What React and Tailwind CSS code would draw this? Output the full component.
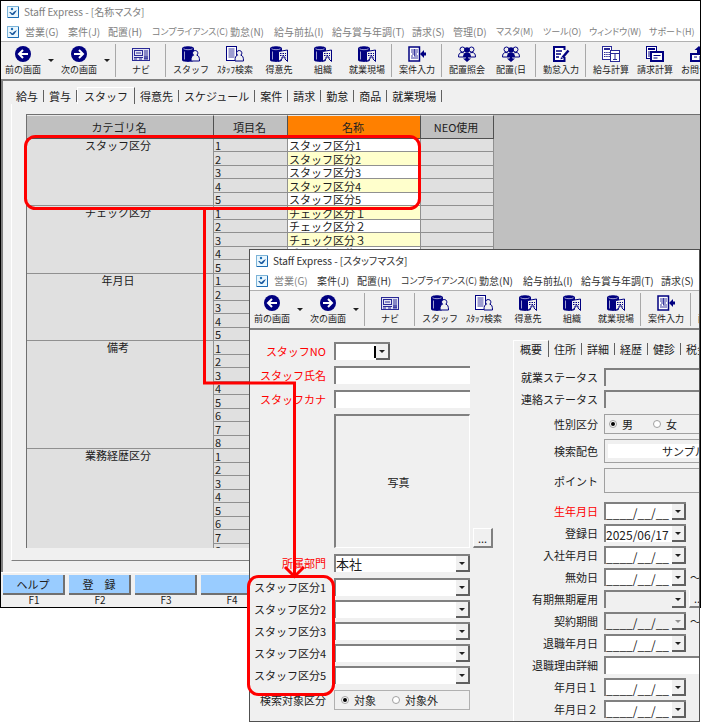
import React from "react";
import clsx from "clsx";

// region Data

const menus = [
	{ label: "営業(G)", width: "w-[43px]" },
	{ label: "案件(J)", width: "w-10" },
	{ label: "配置(H)", width: "w-11" },
	{ label: "コンプライアンス(C)", width: "w-[78px]", kana: true },
	{ label: "勤怠(N)", width: "w-11" },
	{ label: "給与前払(I)", width: "w-[58px]" },
	{ label: "給与賞与年調(T)", width: "w-20" },
	{ label: "請求(S)", width: "w-[41px]" },
	{ label: "管理(D)", width: "w-[43px]" },
	{ label: "マスタ(M)", width: "w-[47px]", kana: true },
	{ label: "ツール(O)", width: "w-[46px]", kana: true },
	{ label: "ウィンドウ(W)", width: "w-[60px]", kana: true },
	{ label: "サポート(H)", width: "w-[47px]", kana: true },
];

const tools = [
	[
		{ label: "前の画面", icon: "back", arrow: true },
		{ label: "次の画面", icon: "next", arrow: true },
	],
	[{ label: "ナビ", icon: "navi" }],
	[
		{ label: "スタッフ", icon: "staff" },
		{ label: "ｽﾀｯﾌ検索", icon: "search" },
		{ label: "得意先", icon: "client" },
		{ label: "組織", icon: "client" },
		{ label: "就業現場", icon: "client" },
	],
	[{ label: "案件入力", icon: "project" }],
	[
		{ label: "配置照会", icon: "people" },
		{ label: "配置(日", icon: "people" },
	],
	[{ label: "勤怠入力", icon: "edit" }],
	[
		{ label: "給与計算", icon: "payroll" },
		{ label: "請求計算", icon: "billing" },
		{ label: "お問合せ", icon: "inquiry" },
	],
];

const masterTabs = [
	"給与",
	"賞与",
	"スタッフ",
	"得意先",
	"スケジュール",
	"案件",
	"請求",
	"勤怠",
	"商品",
	"就業現場",
];

const staffTabs = ["概要", "住所", "詳細", "経歴", "健診", "税金"];

const categories = [
	{
		name: "スタッフ区分",
		items: [
			"スタッフ区分1",
			"スタッフ区分2",
			"スタッフ区分3",
			"スタッフ区分4",
			"スタッフ区分5",
		],
	},
	{
		name: "チェック区分",
		items: [
			"チェック区分１",
			"チェック区分２",
			"チェック区分３",
			"チェック区分４",
			"",
		],
	},
	{ name: "年月日", items: ["", "", "", "", ""] },
	{ name: "備考", items: ["", "", "", "", "", "", "", ""] },
	{ name: "業務経歴区分", items: ["", "", "", "", "", "", "", ""] },
];

const functionKeys = [
	{ key: "F1", label: "ヘルプ" },
	{ key: "F2", label: "登　録" },
	{ key: "F3", label: "" },
	{ key: "F4", label: "" },
];

const emptyDate = "____/__/__";

// region Icons

const Cylinder = () => (
	<>
		<path d="M0 2.500C0-.5 12-.5 12 2.500V14c0 2.500-12 2.500-12 0z" fill="#000080" />
		<path
			d="M1.500 2.800c1.500 1.200 7.500 1.200 9 0M2.500 5.500v8"
			stroke="#c8c8e8"
			strokeWidth="0.8"
			fill="none"
		/>
	</>
);

const Person = () => (
	<path
		d="M13.200 4.500a2.600 2.600 0 0 1 1.600 4.700c2 .5 2.700 2 2.700 5.800H9c0-3.800.7-5.300 2.600-5.800a2.600 2.600 0 0 1 1.600-4.700z"
		fill="#f0f0f0"
		stroke="#000080"
	/>
);

const icons = {
	back: (
		<>
			<circle cx="9" cy="8" r="8" fill="#000080" />
			<path d="M14 8H5m4-4L5 8l4 4" stroke="#fff" strokeWidth="2" fill="none" />
		</>
	),
	next: (
		<>
			<circle cx="9" cy="8" r="8" fill="#000080" />
			<path d="M4 8h9M9 4l4 4-4 4" stroke="#fff" strokeWidth="2" fill="none" />
		</>
	),
	navi: (
		<g fill="none" stroke="#2a2a96">
			<rect x=".5" y="2.500" width="17" height="12" fill="#e4e4f4" />
			<rect x="2.500" y="4.500" width="8" height="5" />
			<path d="M4 7h5M12 5h4M12 7h4M12 9h4M2 11.500h9M2 13h3m2 0h3m2 0h4" />
			<path d="M13 10v3M15 10v3" strokeWidth="1.500" />
		</g>
	),
	staff: (
		<>
			<Cylinder />
			<Person />
		</>
	),
	search: (
		<>
			<rect x=".5" y=".5" width="10" height="14" fill="#fff" stroke="#000080" />
			<path d="M2.500 3h6M2.500 5h6M2.500 7h6M2.500 9h6M2.500 11h6" stroke="#3a3aa0" />
			<Person />
		</>
	),
	client: (
		<>
			<Cylinder />
			<path d="M8.500 15.500V5.500l9-1.500v11.500l-2.500-2.500v-2h-3v2z" fill="#f0f0f0" stroke="#000080" />
			<path d="M10 7.500h6M10 9.500h6" stroke="#000080" strokeDasharray="1.500 1" />
		</>
	),
	project: (
		<>
			<rect x="1" y="1" width="10.500" height="14" fill="#fff" stroke="#000080" strokeWidth="1.500" />
			<path d="M3 4h7M3 6h7M4 8h5M3 10h2m1 0h4M3 12h7M6.500 3v7" stroke="#3a3aa0" />
			<path d="M12 8l4-4v2.500h2v3h-2V12z" fill="#000080" />
		</>
	),
	people: (
		<>
			<g fill="#f0f0f0" stroke="#000080">
				<circle cx="4.500" cy="3.500" r="2.500" />
				<circle cx="13.500" cy="3.500" r="2.500" />
				<path d="M.5 11c0-3 1-4.500 3.500-4.500S7 8 7 11zM17.500 11c0-3-1-4.500-3.500-4.500S11 8 11 11z" />
			</g>
			<g fill="#000080">
				<circle cx="9" cy="4" r="2.800" />
				<path d="M5 11c0-3 1.500-4.500 4-4.500s4 1.500 4 4.500z" />
				<path d="M7.500 11h3v1.500H13L9 16l-4-3.500h2.500z" />
			</g>
		</>
	),
	edit: (
		<>
			<path d="M12.500 4V1H2v14h10.500v-4" fill="#fff" stroke="#000080" strokeWidth="2" />
			<path d="M4 5h6M4 8h5M4 11h3" stroke="#000080" strokeWidth="1.500" />
			<path d="M16.500 4.500l-6 7" stroke="#000080" strokeWidth="2.500" />
			<path d="M8.500 13.500l.5-2.500 2 1.500z" fill="#000080" />
		</>
	),
	payroll: (
		<g stroke="#2a2a96">
			<rect x=".5" y=".5" width="9" height="13" fill="#fff" />
			<path d="M2 3h6" strokeWidth="2" />
			<path d="M2 6.500h6M2 8.500h6M2 10.500h6" strokeDasharray="1.500 .7" />
			<rect x="8.500" y="4.500" width="9" height="11" fill="#fff" />
			<path d="M9 7.500h8M13 8v6M11 13.500h4" />
		</g>
	),
	billing: (
		<g stroke="#000080">
			<rect x=".5" y=".5" width="10" height="12" fill="#fff" />
			<path d="M2 3h7" strokeWidth="2" />
			<path d="M2 6h2M2 8h2M2 10h2" />
			<rect x="5" y="6" width="12" height="9" fill="#fff" strokeWidth="2" />
			<path d="M7.500 9.500h7M7.500 12h4" />
		</g>
	),
	inquiry: (
		<>
			<path d="M9 0l4.500 4H11v3H7V4H4.500z" fill="#000080" />
			<rect x="1" y="8" width="16" height="7" fill="#fff" stroke="#000080" strokeWidth="2" />
			<path d="M4 11h3m2 0h5M9 13h5" stroke="#000080" />
		</>
	),
};

const AppIcon = () => (
	<svg className="size-3 shrink-0" viewBox="0 0 12 12">
		<rect x=".5" y=".5" width="11" height="11" fill="#e8f6fd" stroke="#7db4d8" />
		<path d="M11.500 1v10.500H1" stroke="#1c6cb4" fill="none" />
		<circle cx="5" cy="3" r="1.200" fill="#1c6cb4" />
		<path d="M2 6c1.500-.3 2.500.5 3.300 1.500C6.500 6 8 4.700 10 4.200 8.500 6 7.500 9 5.500 9 3.700 9 4 7 2 6z" fill="#14549c" />
	</svg>
);

const Triangle = () => (
	<span className="block border-x-[3px] border-t-[3px] border-x-transparent border-t-current" />
);

// region Window Frame

const TitleBar = ({ title, active }) => (
	<div
		className={clsx(
			"flex h-[21px] items-center gap-[5px] bg-white pl-1.5 text-[10px] [font-feature-settings:'palt']",
			active ? "text-[#303030]" : "text-[#808080]"
		)}
	>
		<AppIcon />
		<h2 className="whitespace-nowrap">Staff Express - [{title}]</h2>
	</div>
);

const MenuBar = ({ items, active }) => (
	<nav className="flex h-[19px] items-center overflow-hidden bg-white pl-1.5">
		<AppIcon />
		<div className="flex pl-1.5">
			{items.map((item, i) => (
				<button
					key={item.label}
					className={clsx(
						"shrink-0 whitespace-nowrap text-left leading-4",
						item.width,
						item.kana
							? "text-[9px] [font-feature-settings:'palt']"
							: "text-[10px]",
						active && i > 0 ? "text-[#303030]" : "text-[#808080]"
					)}
				>
					{item.label}
				</button>
			))}
		</div>
	</nav>
);

const Toolbar = ({ groups }) => (
	<div className="flex h-[38px] overflow-hidden border-t border-[#b0b0b0] bg-[#f0f0f0] py-0.5">
		{groups.map((group, i) => (
			<div key={i} className="flex shrink-0">
				{i > 0 && (
					<span className="mr-[3px] ml-0.5 w-px bg-[#a8a8a8]" />
				)}
				{group.map((tool) => (
					<React.Fragment key={tool.label}>
						<button className="flex w-11 shrink-0 flex-col items-center pt-0.5">
							<svg className="h-4 w-[18px]" viewBox="0 0 18 16">
								{icons[tool.icon]}
							</svg>
							<span className="pt-0.5 text-[9px] leading-3 whitespace-nowrap">
								{tool.label}
							</span>
						</button>
						{tool.arrow && (
							<button
								className="flex w-3 items-center justify-center"
								aria-label={`${tool.label} 一覧`}
							>
								<Triangle />
							</button>
						)}
					</React.Fragment>
				))}
			</div>
		))}
	</div>
);

const TabStrip = ({ tabs, selected }) => (
	<div role="tablist" className="flex h-[17px] overflow-hidden">
		{tabs.map((tab) => (
			<button
				key={tab}
				role="tab"
				aria-selected={tab === selected}
				className={clsx(
					"flex shrink-0 items-center",
					tab === selected
						? "border-t border-r border-l border-t-white border-r-[#606060] border-l-white px-1.5"
						: "px-[5px]"
				)}
			>
				<span>{tab}</span>
				{tab !== selected && (
					<span className="-mr-[5px] ml-[5px] h-3 w-px bg-[#606060]" />
				)}
			</button>
		))}
	</div>
);

// region Master Window

const MasterTable = () => {
	let head =
		"border-r border-b border-[#505050] border-t border-t-[#e8e8e8] pr-0.5 font-normal";
	let cell = "border-r border-b border-[#909090]";

	return (
		<table className="w-[467px] table-fixed border-separate border-spacing-0 border-l border-[#707070]">
			<colgroup>
				<col className="w-[187px]" />
				<col className="w-[74px]" />
				<col className="w-[133px]" />
				<col className="w-[73px]" />
			</colgroup>
			<thead>
				<tr className="h-6 bg-[#c0c0c0]">
					<th className={head}>カテゴリ名</th>
					<th className={head}>項目名</th>
					<th className={clsx(head, "bg-[#ff8000]")}>名称</th>
					<th className={head}>NEO使用</th>
				</tr>
			</thead>
			<tbody className="bg-[#e0e0e0] leading-3">
				{categories.map((category) =>
					category.items.map((item, i) => (
						<tr
							key={`${category.name}-${i}`}
							className="group h-[13px] even:h-[14px]"
						>
							{i === 0 && (
								<td
									rowSpan={category.items.length}
									className={clsx(
										cell,
										"pr-1 text-center align-top"
									)}
								>
									{category.name}
								</td>
							)}
							<td className={clsx(cell, "pl-px")}>{i + 1}</td>
							<td
								className={clsx(
									cell,
									"bg-white pl-px group-even:bg-[#ffffcc]"
								)}
							>
								{item}
							</td>
							<td className={cell} />
						</tr>
					))
				)}
			</tbody>
		</table>
	);
};

const MasterWindow = () => (
	<section className="border border-black bg-[#f0f0f0]">
		<TitleBar title="名称マスタ" />
		<MenuBar items={menus} />
		<Toolbar groups={tools} />
		<div className="border-t-2 border-l-2 border-[#808080] pt-1.5 pb-[11px] pl-2">
			<TabStrip tabs={masterTabs} selected="スタッフ" />
			<div className="border-b border-l border-b-[#808080] border-l-white pt-2.5 pb-3 pl-3.5">
				<div className="h-[434px] overflow-hidden border-t border-[#707070] bg-[#c0c0c0]">
					<MasterTable />
				</div>
			</div>
		</div>
		<div className="flex gap-1 border-t border-white pt-0.5 pb-0.5 pl-0.5">
			{functionKeys.map((item) => (
				<label key={item.key} className="flex w-[62px] flex-col text-center">
					<button className="h-5 border-r-2 border-b-2 border-[#707070] bg-[#99ccff] leading-4">
						{item.label}
					</button>
					<span className="text-[10px] leading-[10px]">{item.key}</span>
				</label>
			))}
		</div>
	</section>
);

// region Form Controls

const sunken = "border-t-2 border-l-2 border-t-[#808080] border-l-[#808080]";

const ArrowBox = ({ disabled }) => (
	<span
		className={clsx(
			"pointer-events-none absolute top-0.5 right-0 bottom-0 flex w-3.5 items-center justify-center border-r-2 border-b-2 border-[#606060] bg-[#f0f0f0]",
			disabled && "text-[#909090]"
		)}
	>
		<Triangle />
	</span>
);

const Row = ({ id, label, red, wide, children }) => (
	<div className="flex items-center">
		<label
			htmlFor={id}
			className={clsx(
				"shrink-0 text-right whitespace-nowrap",
				wide ? "mr-1.5 w-[84px]" : "mr-2 w-[76px]",
				red && "text-[#ff0000]"
			)}
		>
			{label}
		</label>
		{children}
	</div>
);

const SelectField = ({ id, value }) => (
	<div className="relative w-[136px]">
		<select
			id={id}
			className={clsx(
				"block h-[18px] w-full appearance-none bg-white text-[13px] leading-4",
				sunken
			)}
		>
			<option>{value}</option>
		</select>
		<ArrowBox />
	</div>
);

const DateField = ({ id, value, disabled }) => (
	<div className="relative w-[82px] shrink-0">
		<input
			id={id}
			defaultValue={value}
			disabled={disabled}
			className={clsx(
				"block h-[18px] w-full text-[12px] leading-4",
				disabled ? "bg-[#f0f0f0]" : "bg-white",
				sunken
			)}
		/>
		<ArrowBox disabled={disabled && value} />
	</div>
);

const Radio = ({ name, label, checked }) => (
	<label className="flex items-center gap-[5px]">
		<input
			type="radio"
			name={name}
			defaultChecked={checked}
			className="grid size-2 appearance-none place-items-center rounded-full border border-[#a0a0a0] bg-white before:size-1 before:rounded-full checked:before:bg-black"
		/>
		{label}
	</label>
);

// region Staff Window

const StaffBasics = () => (
	<div className="flex w-[263px] shrink-0 flex-col gap-1.5 pt-3">
		<Row id="staff-no" label="スタッフNO" red>
			<div className="relative w-14">
				<input
					id="staff-no"
					className={clsx("block h-[18px] w-full bg-white", sunken)}
				/>
				<span className="absolute top-1 right-3.5 h-3 w-0.5 bg-black" />
				<ArrowBox />
			</div>
		</Row>
		<Row id="staff-name" label="スタッフ氏名" red>
			<input
				id="staff-name"
				className={clsx("h-[18px] w-[136px] bg-white", sunken)}
			/>
		</Row>
		<Row id="staff-kana" label="スタッフカナ" red>
			<input
				id="staff-kana"
				className={clsx("h-[18px] w-[136px] bg-white", sunken)}
			/>
		</Row>
		<div className="flex items-end gap-[3px] pl-[84px]">
			<div
				className={clsx(
					"flex h-[134px] w-[136px] items-center justify-center border-r border-b border-r-white border-b-white pr-2",
					sunken
				)}
			>
				写真
			</div>
			<button className="h-5 w-5 border-t border-r-2 border-b-2 border-l border-t-white border-r-[#808080] border-b-[#808080] border-l-white leading-3">
				...
			</button>
		</div>
		<Row id="department" label="所属部門" red>
			<SelectField id="department" value="本社" />
		</Row>
		<div className="flex flex-col gap-1">
			{categories[0].items.map((item, i) => (
				<Row key={item} id={`kubun-${i}`} label={item}>
					<SelectField id={`kubun-${i}`} value="" />
				</Row>
			))}
		</div>
		<Row label="検索対象区分">
			<div className="flex h-5 w-[136px] items-center gap-4 border border-[#b0b0b0] pl-1.5">
				<Radio name="target" label="対象" checked />
				<Radio name="target" label="対象外" />
			</div>
		</Row>
	</div>
);

const StaffOverview = () => (
	<div className="min-w-0 flex-1 overflow-hidden pt-[10px]">
		<TabStrip tabs={staffTabs} selected="概要" />
		<div className="border-l border-white pt-[11px] pb-[3px]">
			<div className="flex flex-col gap-1">
				<Row id="work-status" label="就業ステータス" wide>
					<input
						id="work-status"
						readOnly
						className={clsx("h-[18px] min-w-0 flex-1", sunken)}
					/>
				</Row>
				<Row id="contact-status" label="連絡ステータス" wide>
					<input
						id="contact-status"
						readOnly
						className={clsx("h-[18px] min-w-0 flex-1", sunken)}
					/>
				</Row>
			</div>
			<div className="flex flex-col gap-[5px] pt-1.5">
				<Row label="性別区分" wide>
					<div className="flex h-5 flex-1 items-center gap-5 border border-r-0 border-[#a0a0a0] pl-1">
						<Radio name="sex" label="男" checked />
						<Radio name="sex" label="女" />
					</div>
				</Row>
				<Row label="検索配色" wide>
					<div className="flex h-6 min-w-0 flex-1 items-center overflow-hidden border border-r-0 border-[#a0a0a0] pl-[3px]">
						<span className="flex-1 bg-white pl-[54px] leading-[14px] whitespace-nowrap">
							サンプル
						</span>
					</div>
				</Row>
				<Row id="point" label="ポイント" wide>
					<input
						id="point"
						readOnly
						className="h-[25px] min-w-0 flex-1 border border-r-0 border-[#a0a0a0]"
					/>
				</Row>
			</div>
			<div className="flex flex-col gap-1 pt-[9px]">
				<Row id="birth" label="生年月日" red wide>
					<DateField id="birth" value={emptyDate} />
				</Row>
				<Row id="registered" label="登録日" wide>
					<DateField id="registered" value="2025/06/17" />
				</Row>
				<Row id="joined" label="入社年月日" wide>
					<DateField id="joined" value={emptyDate} />
				</Row>
				<Row id="invalid" label="無効日" wide>
					<DateField id="invalid" value={emptyDate} />
					<span className="pl-1 leading-4">～</span>
				</Row>
				<Row id="term" label="有期無期雇用" wide>
					<DateField id="term" value="" disabled />
					<button className="ml-[3px] h-[18px] w-5 shrink-0 border-b-2 border-l border-b-[#808080] border-l-white pl-1 text-left leading-3">
						...
					</button>
				</Row>
				<Row id="contract" label="契約期間" wide>
					<DateField id="contract" value={emptyDate} disabled />
					<span className="pl-1 leading-4">～</span>
				</Row>
				<Row id="retired" label="退職年月日" wide>
					<DateField id="retired" value={emptyDate} />
				</Row>
				<Row id="reason" label="退職理由詳細" wide>
					<input
						id="reason"
						className={clsx("h-[18px] min-w-0 flex-1 bg-white", sunken)}
					/>
				</Row>
				<Row id="date-1" label="年月日１" wide>
					<DateField id="date-1" value={emptyDate} />
				</Row>
				<Row id="date-2" label="年月日２" wide>
					<DateField id="date-2" value={emptyDate} />
				</Row>
			</div>
		</div>
	</div>
);

const StaffWindow = () => (
	<section className="absolute top-[249px] right-px left-[249px] border border-[#505050] bg-[#f0f0f0]">
		<TitleBar title="スタッフマスタ" active />
		<MenuBar items={menus.slice(0, 8)} active />
		<Toolbar groups={tools.slice(0, 5)} />
		<div className="flex border-t-2 border-[#808080]">
			<StaffBasics />
			<StaffOverview />
		</div>
	</section>
);

// region Callout

// red frames and the arrow that ties the master rows to the staff form
const Callout = () => (
	<svg
		className="pointer-events-none absolute top-0 left-0 h-[723px] w-[440px]"
		fill="none"
		stroke="#ff0000"
		strokeWidth="3"
	>
		<rect x="25.500" y="136.500" width="394" height="72" rx="10" />
		<rect x="248.500" y="576.500" width="85" height="118" rx="10" />
		<path d="M204.500 208v175H294.500V575" />
		<path d="M285 567l9.500 9.500 9.500-9.500" />
	</svg>
);

// region App

const App = () => (
	<main className="relative min-h-screen overflow-hidden bg-white font-['Noto_Sans_CJK_JP',sans-serif] text-[11px] leading-4 text-[#202020]">
		<MasterWindow />
		<StaffWindow />
		<Callout />
	</main>
);

export default App;
